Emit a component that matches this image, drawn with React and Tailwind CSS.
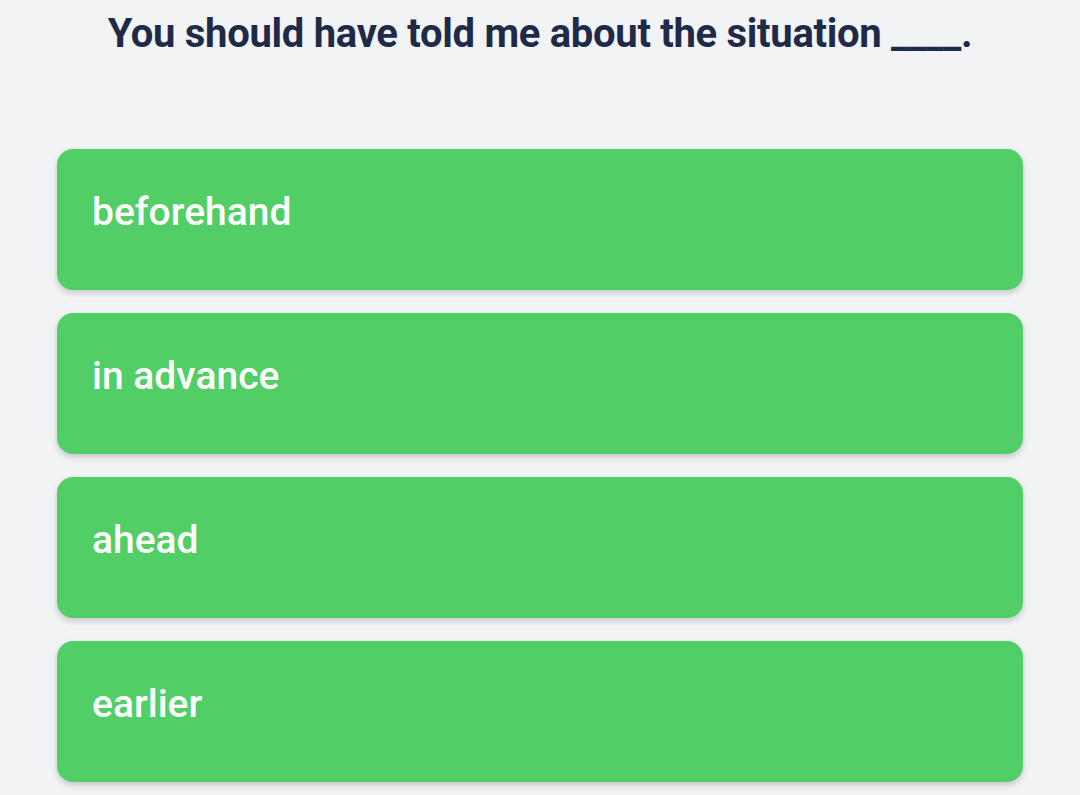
import React from 'react';

const options = ['beforehand', 'in advance', 'ahead', 'earlier'];

export default function App() {
  return (
    <div className="min-h-[795px] w-full bg-[#f1f3f5] font-['Roboto',sans-serif]">
      <h1 className="pt-[10px] text-center text-[40px] font-bold leading-[48px] tracking-[-0.3px] text-[#1f2a48]">
        You should have told me about the situation ____.
      </h1>
      <div className="mt-[91px] flex flex-col gap-[23px] px-[57px]">
        {options.map((opt) => (
          <button
            key={opt}
            className="flex h-[141px] w-full items-start rounded-2xl bg-[#51cf66] px-[35px] pt-[40px] text-left text-[39px] font-medium leading-[46px] text-white shadow-[0_3px_6px_rgba(0,0,0,0.18)]"
          >
            {opt}
          </button>
        ))}
      </div>
    </div>
  );
}
